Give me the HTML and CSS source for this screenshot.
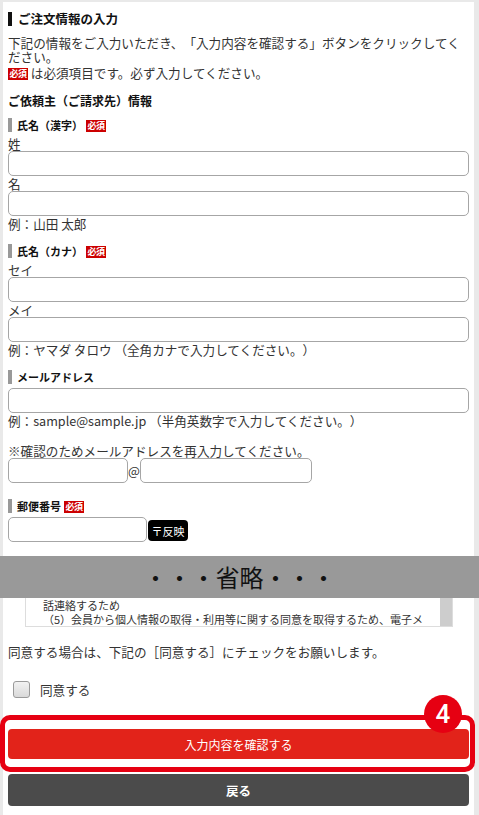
FILE: index.html
```html
<!DOCTYPE html>
<html lang="ja">
<head>
  <meta charset="utf-8">
  <title>ご注文情報の入力</title>

  <!-- ESTILO -->
  <link rel="stylesheet" href="styles.css">
</head>
<body>
  <!-- FORMULARIO (PARTE SUPERIOR) -->
  <div class="sheet sheet-top">
    <h2 class="title">ご注文情報の入力</h2>
    <p class="lead">下記の情報をご入力いただき、「入力内容を確認する」ボタンをクリックしてください。</p>
    <p class="note"><span class="req">必須</span> は必須項目です。必ず入力してください。</p>

    <h3 class="subtitle">ご依頼主（ご請求先）情報</h3>

    <div class="field field-first">
      <div class="field-title">氏名（漢字）<span class="req">必須</span></div>
      <div class="label">姓</div>
      <input class="text" type="text">
      <div class="label">名</div>
      <input class="text" type="text">
      <div class="hint">例：山田 太郎</div>
    </div>

    <div class="field">
      <div class="field-title">氏名（カナ）<span class="req">必須</span></div>
      <div class="label">セイ</div>
      <input class="text" type="text">
      <div class="label">メイ</div>
      <input class="text" type="text">
      <div class="hint">例：ヤマダ タロウ （全角カナで入力してください。）</div>
    </div>

    <div class="field">
      <div class="field-title">メールアドレス</div>
      <input class="text text-gap" type="text">
      <div class="hint">例：sample@sample.jp （半角英数字で入力してください。）</div>
      <div class="confirm">※確認のためメールアドレスを再入力してください。</div>
      <div class="mail-row">
        <input class="text mail-user" type="text">
        <span class="at">@</span>
        <input class="text mail-domain" type="text">
      </div>
    </div>

    <div class="field field-zip">
      <div class="field-title">郵便番号<span class="req">必須</span></div>
      <div class="zip-row">
        <input class="text zip" type="text">
        <button class="zip-btn">〒反映</button>
      </div>
    </div>
  </div>

  <div class="omit">・・・省略・・・</div>

  <!-- FORMULARIO (PARTE INFERIOR) -->
  <div class="sheet sheet-bottom">
    <div class="policy">
      <div class="policy-text">
        <div>話連絡するため</div>
        <div>（5）会員から個人情報の取得・利用等に関する同意を取得するため、電子メ</div>
      </div>
      <div class="policy-scroll"></div>
    </div>

    <p class="agree-text">同意する場合は、下記の［同意する］にチェックをお願いします。</p>
    <label class="agree"><input type="checkbox">同意する</label>

    <div class="highlight">
      <span class="step">4</span>
      <button class="btn btn-confirm">入力内容を確認する</button>
    </div>
    <button class="btn btn-back">戻る</button>
  </div>
</body>
</html>
```

FILE: styles.css
```css
body {
  font-family: "Noto Sans CJK JP", sans-serif;
  margin: 0;
  background-color: #e9e9e9;
  color: #333;
  text-spacing-trim: space-all;
}
.sheet {
  background-color: #fff;
  margin: 0 5px 0 3px;
  padding: 0 5px;
}
.sheet-top {
  margin-top: 2px;
  padding-top: 10px;
  padding-bottom: 14px;
}
.sheet-bottom {
  padding-bottom: 20px;
}
.title {
  margin: 0;
  font-size: 12.5px;
  line-height: 14px;
  color: #111;
  border-left: 4px solid #111;
  padding-left: 6px;
}
.lead {
  margin: 10px 0 0;
  font-size: 12.6px;
  line-height: 14px;
}
.note {
  margin: 1px 0 0;
  font-size: 12.6px;
  line-height: 16px;
}
.req {
  display: inline-block;
  width: 20px;
  height: 12px;
  line-height: 12px;
  background-color: #c00;
  color: #fff;
  font-size: 9px;
  font-weight: bold;
  letter-spacing: -0.5px;
  text-align: center;
  vertical-align: 1px;
}
.field-title .req {
  margin-left: 3px;
}
.subtitle {
  margin: 12px 0 0;
  font-size: 12px;
  line-height: 16px;
  color: #111;
}
.field {
  margin-top: 13px;
}
.field-first {
  margin-top: 9px;
}
.field-zip {
  margin-top: 16px;
}
.field-title {
  font-size: 11px;
  line-height: 14px;
  font-weight: bold;
  color: #111;
  border-left: 4px solid #999;
  padding-left: 5px;
}
.label {
  margin-top: 4px;
  font-size: 12.6px;
  line-height: 15px;
}
.text + .label {
  margin-top: 0;
}
.text {
  display: block;
  box-sizing: border-box;
  width: 100%;
  height: 25px;
  margin: 0;
  border: 1px solid #a6a6a6;
  border-radius: 5px;
  background-color: #fff;
  font-family: inherit;
}
.text-gap {
  margin-top: 4px;
}
.hint {
  font-size: 12.6px;
  line-height: 15px;
}
.confirm {
  margin-top: 15px;
  font-size: 12.6px;
  line-height: 15px;
}
.mail-row {
  display: flex;
  align-items: center;
}
.mail-user {
  width: 120px;
}
.mail-domain {
  width: 172px;
}
.at {
  width: 12px;
  text-align: center;
  font-size: 12.6px;
}
.zip-row {
  display: flex;
  align-items: flex-start;
  margin-top: 4px;
}
.zip {
  width: 139px;
}
.zip-btn {
  width: 40px;
  height: 21px;
  margin: 3px 0 0 1px;
  padding: 0;
  border: none;
  border-radius: 4px;
  background-color: #000;
  color: #fff;
  font-family: inherit;
  font-size: 11px;
}
.omit {
  height: 42px;
  line-height: 42px;
  background-color: #999;
  color: #111;
  font-size: 24px;
  text-align: center;
}
.policy {
  display: flex;
  box-sizing: border-box;
  width: 428px;
  height: 29px;
  margin-left: 17px;
  border: 1px solid #ddd;
  border-top: none;
  overflow: hidden;
}
.policy-text {
  flex: 1;
  padding-left: 17px;
  font-size: 11px;
  line-height: 14px;
  white-space: nowrap;
  overflow: hidden;
}
.policy-scroll {
  width: 12px;
  background-color: #cdcdcd;
}
.agree-text {
  margin: 17px 0 0;
  font-size: 12.6px;
  line-height: 15px;
}
.agree {
  display: flex;
  align-items: center;
  margin-top: 22px;
  font-size: 12.6px;
  line-height: 17px;
}
.agree input {
  appearance: none;
  width: 17px;
  height: 17px;
  margin: 0 10px 0 5px;
  border: 1px solid #9a9a9a;
  border-radius: 3px;
  background: linear-gradient(#f2f2f2, #d9d9d9);
}
.highlight {
  position: relative;
  margin: 17px -6px 0 -8px;
  padding: 9px 1px 8px 3px;
  border: 5px solid #e60012;
  border-radius: 10px;
}
.step {
  position: absolute;
  top: -25px;
  right: 8px;
  width: 38px;
  height: 38px;
  line-height: 38px;
  border-radius: 50%;
  background-color: #e60012;
  color: #fff;
  font-family: Roboto, sans-serif;
  font-size: 26px;
  font-weight: 500;
  text-align: center;
}
.btn {
  display: block;
  width: 100%;
  margin: 0;
  padding: 0;
  border: none;
  border-radius: 4px;
  color: #fff;
  font-family: inherit;
}
.btn-confirm {
  height: 30px;
  background-color: #e2231a;
  font-size: 12px;
}
.btn-back {
  height: 32px;
  margin-top: 2px;
  background-color: #4b4b4b;
  font-size: 12.5px;
  font-weight: bold;
}
```
